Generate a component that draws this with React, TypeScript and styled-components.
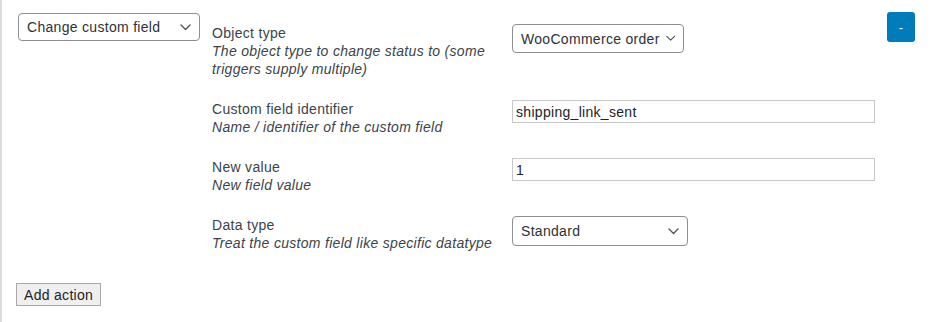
import React from 'react'
import styled, { createGlobalStyle } from 'styled-components'

const font = '"Liberation Sans", Arial, sans-serif'

const GlobalStyle = createGlobalStyle`
  html, body {
    margin: 0;
    padding: 0;
    background: #fff;
  }
  body {
    font-family: ${font};
    font-size: 14px;
    letter-spacing: 0.3px;
    color: #3c434a;
  }
`

const chevron = (
  <svg width="11" height="7" viewBox="0 0 11 7" fill="none">
    <path d="M1 1l4.5 4.5L10 1" stroke="#50575e" strokeWidth="1.4" strokeLinecap="round" strokeLinejoin="round" />
  </svg>
)

interface FieldRow {
  label: string
  desc: string
  kind: 'select' | 'input'
  value: string
  width?: number
  height?: number
}

const rows: FieldRow[] = [
  {
    label: 'Object type',
    desc: 'The object type to change status to (some triggers supply multiple)',
    kind: 'select',
    value: 'WooCommerce order',
    width: 172,
    height: 29,
  },
  {
    label: 'Custom field identifier',
    desc: 'Name / identifier of the custom field',
    kind: 'input',
    value: 'shipping_link_sent',
  },
  { label: 'New value', desc: 'New field value', kind: 'input', value: '1' },
  {
    label: 'Data type',
    desc: 'Treat the custom field like specific datatype',
    kind: 'select',
    value: 'Standard',
    width: 176,
    height: 30,
  },
]

export default function App() {
  return (
    <>
      <GlobalStyle />
      <Panel>
        <ActionRow>
          <TypeCol>
            <Select $width={182} $height={28}>
              <span>Change custom field</span>
              {chevron}
            </Select>
          </TypeCol>
          <Fields>
            {rows.map((row) => (
              <React.Fragment key={row.label}>
                <LabelCell>
                  <Label>{row.label}</Label>
                  <Desc>{row.desc}</Desc>
                </LabelCell>
                <div>
                  {row.kind === 'select' ? (
                    <Select $width={row.width ?? 172} $height={row.height ?? 30}>
                      <span>{row.value}</span>
                      {chevron}
                    </Select>
                  ) : (
                    <TextInput readOnly value={row.value} />
                  )}
                </div>
              </React.Fragment>
            ))}
          </Fields>
          <RemoveButton>-</RemoveButton>
        </ActionRow>
        <AddButton>Add action</AddButton>
      </Panel>
    </>
  )
}

const Panel = styled.div`
  border-left: 2px solid #dcdcde;
  padding: 12px 28px 0 14px;
  height: 322px;
  box-sizing: border-box;
`

const ActionRow = styled.div`
  display: flex;
  align-items: flex-start;
`

const TypeCol = styled.div`
  width: 194px;
  padding-top: 1px;
  padding-left: 2px;
  flex-shrink: 0;
`

const Select = styled.div<{ $width: number; $height: number }>`
  width: ${(p) => p.$width}px;
  height: ${(p) => p.$height}px;
  box-sizing: border-box;
  display: flex;
  align-items: center;
  justify-content: space-between;
  gap: 6px;
  padding: 0 8px 0 8px;
  border: 1px solid #8c8f94;
  border-radius: 4px;
  color: #2c3338;
  font-size: 14px;
  background: #fff;
  white-space: nowrap;
`

const Fields = styled.div`
  flex: 1;
  display: grid;
  grid-template-columns: 288px 363px;
  column-gap: 12px;
  row-gap: 22px;
  padding-top: 12px;
  align-items: start;
`

const LabelCell = styled.div`
  line-height: 18px;
`

const Label = styled.div`
  color: #3c434a;
`

const Desc = styled.div`
  font-style: italic;
  color: #3c434a;
`

const TextInput = styled.input`
  display: block;
  width: 363px;
  height: 23px;
  box-sizing: border-box;
  border: 1px solid #c8c8c8;
  border-radius: 0;
  padding: 0 3px;
  margin: 0;
  font-family: ${font};
  font-size: 14px;
  letter-spacing: 0.3px;
  color: #1d2327;
  outline: none;
`

const RemoveButton = styled.button`
  width: 28px;
  height: 30px;
  flex-shrink: 0;
  margin-left: auto;
  border: none;
  border-radius: 3px;
  background: #007cba;
  color: #fff;
  font-family: ${font};
  font-size: 13px;
  padding: 0;
`

const AddButton = styled.button`
  display: block;
  margin-top: 31px;
  height: 23px;
  padding: 0 7px;
  border: 1px solid #a9a9a9;
  border-radius: 0;
  background: #efefef;
  color: #1d2327;
  font-family: ${font};
  font-size: 14px;
  letter-spacing: 0.3px;
`
